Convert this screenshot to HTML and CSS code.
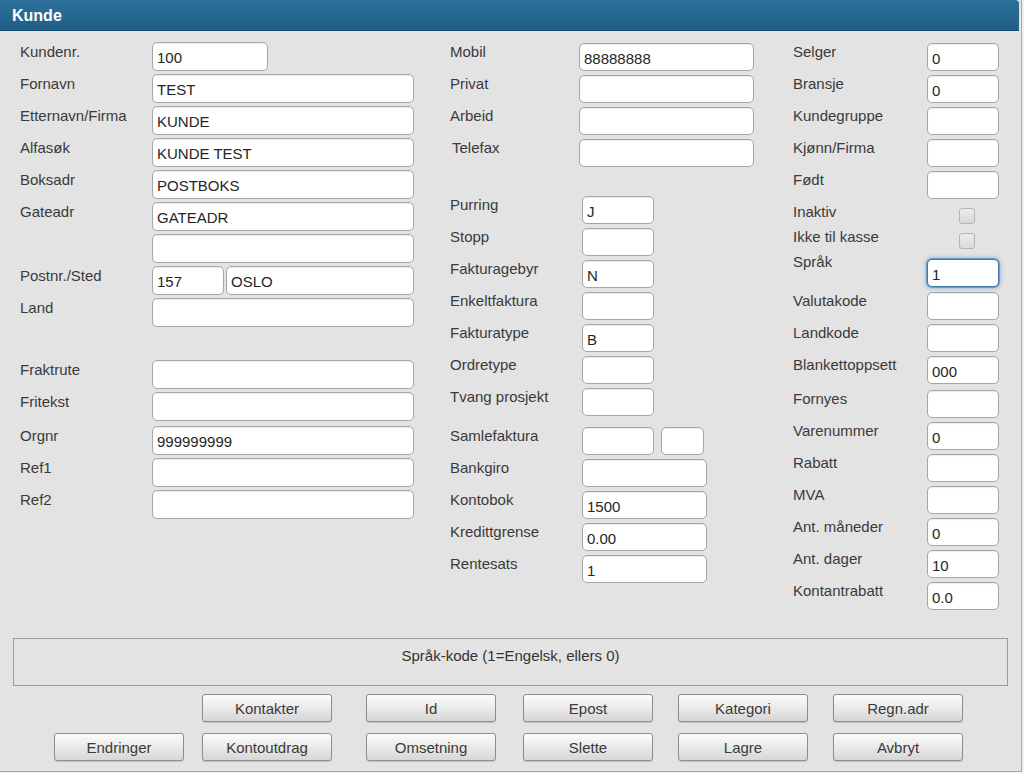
FILE: index.html
```html
<!DOCTYPE html>
<html lang="no">
<head>
<meta charset="utf-8">
<title>Kunde</title>
<link rel="stylesheet" href="styles.css">
</head>
<body>
<div class="dialog">
  <div class="titlebar">Kunde</div>
  <div class="content">
    <div class="form">
      <div class="col col-left">
        <div class="row"><div class="lbl">Kundenr.</div><div class="field w116">100</div></div>
        <div class="row"><div class="lbl">Fornavn</div><div class="field wfull">TEST</div></div>
        <div class="row"><div class="lbl">Etternavn/Firma</div><div class="field wfull">KUNDE</div></div>
        <div class="row"><div class="lbl">Alfasøk</div><div class="field wfull">KUNDE TEST</div></div>
        <div class="row"><div class="lbl">Boksadr</div><div class="field wfull">POSTBOKS</div></div>
        <div class="row"><div class="lbl">Gateadr</div><div class="field wfull">GATEADR</div></div>
        <div class="row"><div class="lbl"></div><div class="field wfull"></div></div>
        <div class="row"><div class="lbl">Postnr./Sted</div><div class="field w72">157</div><div class="field w188 ml2">OSLO</div></div>
        <div class="row"><div class="lbl">Land</div><div class="field wfull"></div></div>
        <div class="row gap30"><div class="lbl">Fraktrute</div><div class="field wfull"></div></div>
        <div class="row"><div class="lbl">Fritekst</div><div class="field wfull"></div></div>
        <div class="row gap2"><div class="lbl">Orgnr</div><div class="field wfull">999999999</div></div>
        <div class="row"><div class="lbl">Ref1</div><div class="field wfull"></div></div>
        <div class="row"><div class="lbl">Ref2</div><div class="field wfull"></div></div>
      </div>

      <div class="col col-mid">
        <div class="row"><div class="lbl l129">Mobil</div><div class="field w174">88888888</div></div>
        <div class="row"><div class="lbl l129">Privat</div><div class="field w174"></div></div>
        <div class="row"><div class="lbl l129">Arbeid</div><div class="field w174"></div></div>
        <div class="row"><div class="lbl l129 ind1">Telefax</div><div class="field w174"></div></div>
        <div class="row gap25"><div class="lbl l132">Purring</div><div class="field w71">J</div></div>
        <div class="row"><div class="lbl l132">Stopp</div><div class="field w71"></div></div>
        <div class="row"><div class="lbl l132">Fakturagebyr</div><div class="field w71">N</div></div>
        <div class="row"><div class="lbl l132">Enkeltfaktura</div><div class="field w71"></div></div>
        <div class="row"><div class="lbl l132">Fakturatype</div><div class="field w71">B</div></div>
        <div class="row"><div class="lbl l132">Ordretype</div><div class="field w71"></div></div>
        <div class="row"><div class="lbl l132">Tvang prosjekt</div><div class="field w71"></div></div>
        <div class="row gap7"><div class="lbl l132">Samlefaktura</div><div class="field w71"></div><div class="field w42 ml8"></div></div>
        <div class="row"><div class="lbl l132">Bankgiro</div><div class="field w124"></div></div>
        <div class="row"><div class="lbl l132">Kontobok</div><div class="field w124">1500</div></div>
        <div class="row"><div class="lbl l132">Kredittgrense</div><div class="field w124">0.00</div></div>
        <div class="row"><div class="lbl l132">Rentesats</div><div class="field w124">1</div></div>
      </div>

      <div class="col col-right">
        <div class="row"><div class="lbl">Selger</div><div class="field w71">0</div></div>
        <div class="row"><div class="lbl">Bransje</div><div class="field w71">0</div></div>
        <div class="row"><div class="lbl">Kundegruppe</div><div class="field w71"></div></div>
        <div class="row"><div class="lbl">Kjønn/Firma</div><div class="field w71"></div></div>
        <div class="row"><div class="lbl">Født</div><div class="field w71"></div></div>
        <div class="row check"><div class="lbl">Inaktiv</div><div class="checkbox"></div></div>
        <div class="row check"><div class="lbl">Ikke til kasse</div><div class="checkbox"></div></div>
        <div class="row focusrow"><div class="lbl">Språk</div><div class="field w71 focused">1</div></div>
        <div class="row"><div class="lbl">Valutakode</div><div class="field w71"></div></div>
        <div class="row"><div class="lbl">Landkode</div><div class="field w71"></div></div>
        <div class="row"><div class="lbl">Blankettoppsett</div><div class="field w71">000</div></div>
        <div class="row gap2"><div class="lbl">Fornyes</div><div class="field w71"></div></div>
        <div class="row"><div class="lbl">Varenummer</div><div class="field w71">0</div></div>
        <div class="row"><div class="lbl">Rabatt</div><div class="field w71"></div></div>
        <div class="row"><div class="lbl">MVA</div><div class="field w71"></div></div>
        <div class="row"><div class="lbl">Ant. måneder</div><div class="field w71">0</div></div>
        <div class="row"><div class="lbl">Ant. dager</div><div class="field w71">10</div></div>
        <div class="row"><div class="lbl">Kontantrabatt</div><div class="field w71">0.0</div></div>
      </div>
    </div>

    <div class="status">Språk-kode (1=Engelsk, ellers 0)</div>

    <div class="buttons">
      <button class="btn start2">Kontakter</button>
      <button class="btn">Id</button>
      <button class="btn">Epost</button>
      <button class="btn">Kategori</button>
      <button class="btn">Regn.adr</button>
      <button class="btn">Endringer</button>
      <button class="btn">Kontoutdrag</button>
      <button class="btn">Omsetning</button>
      <button class="btn">Slette</button>
      <button class="btn">Lagre</button>
      <button class="btn">Avbryt</button>
    </div>
  </div>
</div>
</body>
</html>
```

FILE: styles.css
```css
html, body {
  margin: 0;
  padding: 0;
}

body {
  background: #efefef;
  font-family: "Liberation Sans", Arial, sans-serif;
  font-size: 15px;
  color: #383838;
}

.dialog {
  width: 1022px;
  height: 772px;
  box-sizing: border-box;
  background: #e3e3e3;
  border-right: 1px solid #a9a9a9;
  border-bottom: 1px solid #a9a9a9;
  display: flex;
  flex-direction: column;
}

.titlebar {
  height: 31px;
  line-height: 31px;
  padding-left: 12px;
  margin-right: 2px;
  color: #fff;
  font-weight: bold;
  font-size: 16px;
  background: linear-gradient(to bottom, #2c7099 0%, #276991 45%, #1f5d84 100%);
  border-top-right-radius: 4px;
  box-shadow: inset 0 -1px 0 #1a5074;
}

.content {
  padding-top: 11px;
}

.form {
  display: flex;
  padding-left: 20px;
}

.col {
  display: flex;
  flex-direction: column;
}

.col-left {
  width: 394px;
}

.col-mid {
  width: 303px;
  margin-left: 36px;
  padding-top: 1px;
}

.col-right {
  width: 205px;
  margin-left: 40px;
  padding-top: 1px;
}

.row {
  display: flex;
  align-items: flex-start;
  height: 28px;
  margin-bottom: 4px;
}

.col-left .row {
  height: 29px;
  margin-bottom: 3px;
}

.lbl {
  flex: none;
  line-height: 18px;
  font-size: 15px;
  color: #3a3a3a;
  white-space: nowrap;
}

.col-left .lbl {
  width: 132px;
  padding-top: 1px;
}

.col-right .lbl {
  width: 134px;
}

.l129 { width: 129px; }
.l132 { width: 132px; }
.ind1 { padding-left: 2px; box-sizing: border-box; }

.field {
  flex: none;
  box-sizing: border-box;
  height: 28px;
  background: #fff;
  border: 1px solid #a6a6a6;
  border-radius: 5px;
  box-shadow: inset 0 1px 1px rgba(0, 0, 0, 0.08);
  padding: 2px 4px 0;
  font-size: 15px;
  color: #262626;
  display: flex;
  align-items: center;
  white-space: nowrap;
  overflow: hidden;
}

.col-left .field {
  height: 29px;
}

.wfull { width: 262px; }
.w116 { width: 116px; }
.w72 { width: 72px; }
.w188 { width: 188px; }
.w174 { width: 175px; }
.w71 { width: 72px; }
.w42 { width: 43px; }
.w124 { width: 125px; }

.ml2 { margin-left: 2px; }
.ml8 { margin-left: 7px; }

.gap30 { margin-top: 30px; }
.gap25 { margin-top: 25px; }
.gap7 { margin-top: 7px; }
.gap2 { margin-top: 2px; }

.row.check {
  height: 25px;
  margin-bottom: 0;
}

.checkbox {
  width: 16px;
  height: 16px;
  margin-top: 5px;
  margin-left: 32px;
  box-sizing: border-box;
  border: 1px solid #b4b4b4;
  border-radius: 3px;
  background: linear-gradient(to bottom, #ececec, #d9d9d9);
}

.row.focusrow {
  height: 34px;
  margin-bottom: 5px;
}

.focusrow .field {
  margin-top: 6px;
}

.field.focused {
  border: 1px solid #3f78a3;
  box-shadow: 0 0 0 1px #6f9fc4, 0 0 4px 1px rgba(80, 140, 200, 0.6);
}

.status {
  margin: 24px 0 0 13px;
  width: 995px;
  height: 48px;
  box-sizing: border-box;
  border: 1px solid #9c9c9c;
  padding-top: 8px;
  text-align: center;
  line-height: 18px;
  font-size: 15px;
  color: #333;
}

.buttons {
  display: grid;
  grid-template-columns: 148px 164px 157px 155px 155px 130px;
  row-gap: 11px;
  padding-left: 54px;
  margin-top: 8px;
}

.btn {
  width: 130px;
  height: 28px;
  box-sizing: border-box;
  border: 1px solid #8d8d8d;
  border-radius: 3px;
  background: linear-gradient(to bottom, #fbfbfb 0%, #ececec 45%, #d6d6d6 100%);
  box-shadow: 0 1px 1px rgba(0, 0, 0, 0.15);
  font-family: "Liberation Sans", Arial, sans-serif;
  font-size: 15px;
  color: #3a3a3a;
  padding: 0;
}

.start2 {
  grid-column-start: 2;
}
```
